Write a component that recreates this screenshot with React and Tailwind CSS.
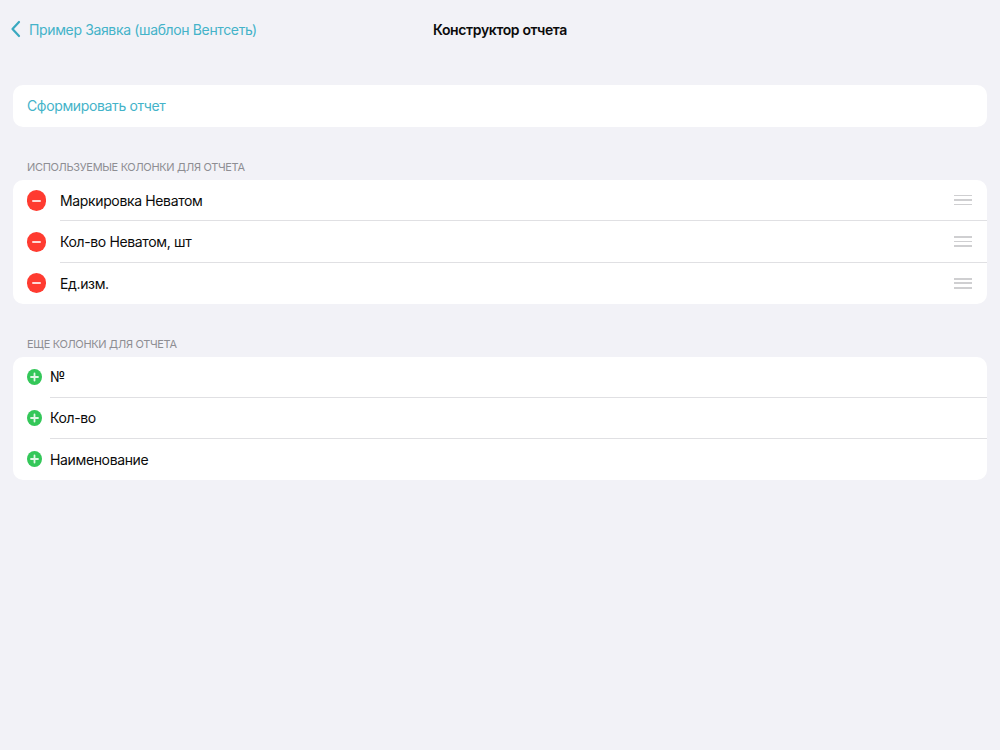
const usedColumns = ["Маркировка Неватом", "Кол-во Неватом, шт", "Ед.изм."]
const moreColumns = ["№", "Кол-во", "Наименование"]

function MinusIcon() {
  return (
    <div className="flex h-[20.5px] w-[18.5px] shrink-0 items-center justify-center rounded-full bg-[#ff3b30]">
      <div className="h-[2px] w-[9px] rounded-full bg-[#ffd9d6]" />
    </div>
  )
}

function PlusIcon() {
  return (
    <svg width="15" height="16" viewBox="0 0 15 16" className="shrink-0">
      <ellipse cx="7.5" cy="8" rx="7.5" ry="8" fill="#34c759" />
      <path d="M7.5 4.5v7M4 8h7" stroke="#e2f7e7" strokeWidth="1.8" strokeLinecap="round" />
    </svg>
  )
}

function DragHandle() {
  return (
    <div className="flex w-[18px] flex-col gap-[2.9px]">
      <div className="h-[1.6px] bg-[#cfcfd1]" />
      <div className="h-[1.6px] bg-[#cfcfd1]" />
      <div className="h-[1.6px] bg-[#cfcfd1]" />
    </div>
  )
}

export default function App() {
  return (
    <div className="min-h-[750px] bg-[#f2f2f7] px-[13px] font-['Inter',sans-serif] text-[14px] tracking-[-0.36px] text-[#0b0b0b]">
      <header className="relative flex h-[58px] items-center justify-center">
        <div className="absolute left-[-3px] flex items-center gap-[8px] text-[#44b3c9]">
          <svg width="11" height="18" viewBox="0 0 11 18" fill="none">
            <path d="M9 2L2.5 9L9 16" stroke="#3aa9c0" strokeWidth="2.2" strokeLinecap="round" strokeLinejoin="round" />
          </svg>
          <span>Пример Заявка (шаблон Вентсеть)</span>
        </div>
        <h1 className="font-semibold">Конструктор отчета</h1>
      </header>

      <div className="mt-[27px] flex h-[42px] items-center rounded-[10px] bg-white px-[14px] pb-[1px] text-[#44b3c9]">
        Сформировать отчет
      </div>

      <div className="mt-[33px] px-[14px] text-[11px] leading-[14px] tracking-[-0.33px] text-[#8e8e93]">
        ИСПОЛЬЗУЕМЫЕ КОЛОНКИ ДЛЯ ОТЧЕТА
      </div>
      <div className="mt-[6px] rounded-[10px] bg-white">
        {usedColumns.map((name, i) => (
          <div key={name} className="flex h-[41.3px] items-center">
            <div className="w-[47px] pl-[14px]">
              <MinusIcon />
            </div>
            <div
              className={`flex h-full flex-1 items-center justify-between pr-[15px] ${
                i < usedColumns.length - 1 ? "border-b border-[#e0e0e3]" : ""
              }`}
            >
              <span>{name}</span>
              <DragHandle />
            </div>
          </div>
        ))}
      </div>

      <div className="mt-[33px] px-[14px] text-[11px] leading-[14px] tracking-[-0.33px] text-[#8e8e93]">
        ЕЩЕ КОЛОНКИ ДЛЯ ОТЧЕТА
      </div>
      <div className="mt-[6px] rounded-[10px] bg-white">
        {moreColumns.map((name, i) => (
          <div key={name} className="flex h-[41px] items-center">
            <div className="w-[37px] pl-[14px]">
              <PlusIcon />
            </div>
            <div
              className={`flex h-full flex-1 items-center ${
                i < moreColumns.length - 1 ? "border-b border-[#e0e0e3]" : ""
              }`}
            >
              <span>{name}</span>
            </div>
          </div>
        ))}
      </div>
    </div>
  )
}
